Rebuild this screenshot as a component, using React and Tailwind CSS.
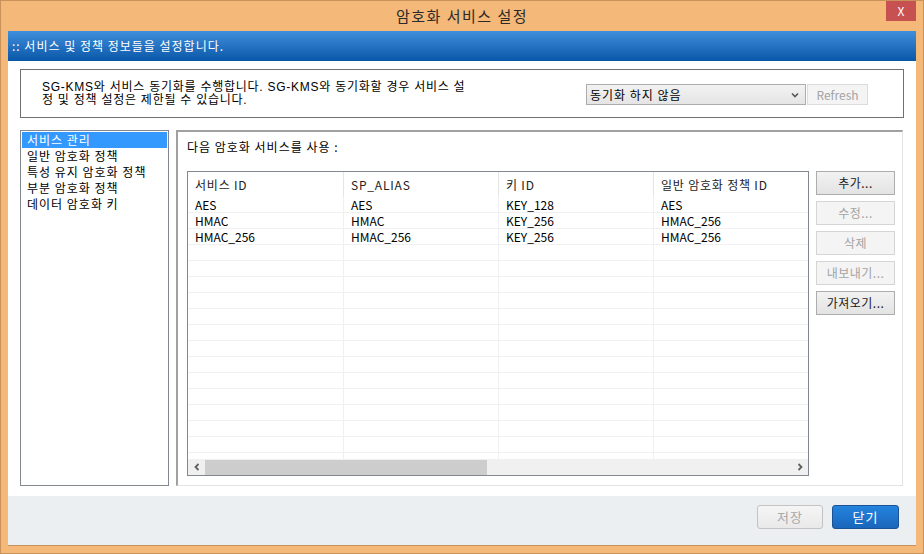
const rows = [
  ['AES', 'AES', 'KEY_128', 'AES'],
  ['HMAC', 'HMAC', 'KEY_256', 'HMAC_256'],
  ['HMAC_256', 'HMAC_256', 'KEY_256', 'HMAC_256'],
]

const columns = ['서비스 ID', 'SP_ALIAS', '키 ID', '일반 암호화 정책 ID']

const menu = ['서비스 관리', '일반 암호화 정책', '특성 유지 암호화 정책', '부분 암호화 정책', '데이터 암호화 키']

const sideButtons = [
  { label: '추가...', enabled: true },
  { label: '수정...', enabled: false },
  { label: '삭제', enabled: false },
  { label: '내보내기...', enabled: false },
  { label: '가져오기...', enabled: true },
]

const font = { fontFamily: '"Noto Sans CJK KR", "Liberation Sans", sans-serif' }

function SideButton({ label, enabled }) {
  return (
    <button
      className={`w-[79px] h-[24px] border text-[12px] leading-none tracking-[0.5px] ${
        enabled
          ? 'border-[#adadad] bg-gradient-to-b from-[#f2f2f2] to-[#e3e3e3] text-[#1a1a1a]'
          : 'border-[#d5d5d5] bg-[#f4f4f4] text-[#a3a3a3]'
      }`}
    >
      {label}
    </button>
  )
}

export default function App() {
  const emptyRows = Array.from({ length: 14 })

  return (
    <div
      className="w-[924px] h-[554px] bg-[#f4b878] border border-[#c8925a] flex flex-col overflow-hidden text-[12px] text-black"
      style={font}
    >
      {/* Title bar */}
      <div className="relative h-[30px] flex items-center justify-center shrink-0">
        <span className="text-[15px] text-[#2a2a2a] tracking-[1.5px]">암호화 서비스 설정</span>
        <div className="absolute top-[-1px] right-[7px] w-[30px] h-[21px] bg-[#c75050] flex items-center justify-center text-white text-[12px]">
          X
        </div>
      </div>

      {/* Client area */}
      <div className="h-[515px] mx-[7px] flex flex-col bg-white border-b border-[#c8925a] overflow-hidden">
        <div className="h-[30px] shrink-0 bg-gradient-to-b from-[#3e8fdc] to-[#0757a8] flex items-center pl-[4px] text-white text-[12px] tracking-[1px]">
          :: 서비스 및 정책 정보들을 설정합니다.
        </div>

        <div className="h-[435px] shrink-0 flex flex-col px-[12px] pt-[8px]">
          {/* Sync box */}
          <div className="h-[49px] border border-[#707070] flex items-center pl-[21px] pr-[35px] shrink-0">
            <div className="flex-1 flex flex-col whitespace-nowrap tracking-[0.75px] font-['Liberation_Sans','Noto_Sans_CJK_KR',sans-serif]">
              <div className="h-[13px] leading-[13px]">SG-KMS와 서비스 동기화를 수행합니다. SG-KMS와 동기화할 경우 서비스 설</div>
              <div className="h-[13px] leading-[13px]">정 및 정책 설정은 제한될 수 있습니다.</div>
            </div>
            <div className="flex items-center gap-[1px] mt-[2px]">
              <div className="w-[220px] h-[21px] border border-[#acacac] bg-gradient-to-b from-[#f2f2f2] to-[#e5e5e5] flex items-center pl-[3px] pr-[6px]">
                <span className="flex-1 tracking-[1px]">동기화 하지 않음</span>
                <svg width="8" height="6" viewBox="0 0 8 6" className="text-[#555]">
                  <path d="M1 1.5 L4 4.5 L7 1.5" fill="none" stroke="currentColor" strokeWidth="1.6" />
                </svg>
              </div>
              <div className="w-[61px] h-[21px] border border-[#dcdcdc] bg-[#f4f4f4] flex items-center justify-center text-[#a3a3a3]">
                Refresh
              </div>
            </div>
          </div>

          {/* Main area */}
          <div className="h-[356px] shrink-0 flex gap-[7px] mt-[12px]">
            {/* Left menu */}
            <div className="w-[149px] border border-[#828790] p-[1px] flex flex-col">
              {menu.map((item, i) => (
                <div
                  key={item}
                  className={`h-[16px] leading-[16px] pl-[5px] whitespace-nowrap tracking-[1px] ${
                    i === 0 ? 'bg-[#3399ff] text-white' : ''
                  }`}
                >
                  {item}
                </div>
              ))}
            </div>

            {/* Right panel */}
            <div className="w-[727px] border-l-2 border-t-2 border-[#a0a0a0] border-r border-b border-r-[#e3e3e3] border-b-[#e3e3e3] flex flex-col pl-[9px] pt-[8px] pb-[8px] overflow-hidden">
              <div className="h-[14px] leading-[14px] shrink-0 tracking-[1px]">다음 암호화 서비스를 사용 :</div>
              <div className="h-[305px] shrink-0 flex gap-[7px] mt-[17px]">
                {/* Table */}
                <div className="w-[622px] h-[305px] border border-[#828790] flex flex-col overflow-hidden">
                  <div className="grid grid-cols-[156px_155px_155px_1fr] h-[25px] shrink-0 text-[#222]">
                    {columns.map((c, i) => (
                      <div
                        key={c}
                        className={`pl-[7px] flex items-center tracking-[0.8px] ${i < 3 ? 'border-r border-[#e5e5e5]' : ''}`}
                      >
                        {c}
                      </div>
                    ))}
                  </div>
                  <div className="h-[262px] shrink-0 overflow-hidden">
                    {rows.map((r, ri) => (
                      <div key={ri} className="grid grid-cols-[156px_155px_155px_1fr] h-[16px] border-b border-[#f0f0f0]">
                        {r.map((v, i) => (
                          <div
                            key={i}
                            className={`pl-[7px] leading-[15px] ${i < 3 ? 'border-r border-[#f0f0f0]' : ''}`}
                          >
                            {v}
                          </div>
                        ))}
                      </div>
                    ))}
                    {emptyRows.map((_, ri) => (
                      <div key={ri} className="grid grid-cols-[156px_155px_155px_1fr] h-[16px] border-b border-[#f0f0f0]">
                        <div className="border-r border-[#f0f0f0]" />
                        <div className="border-r border-[#f0f0f0]" />
                        <div className="border-r border-[#f0f0f0]" />
                        <div />
                      </div>
                    ))}
                  </div>
                  {/* Horizontal scrollbar */}
                  <div className="h-[16px] shrink-0 bg-[#f0f0f0] flex items-center">
                    <div className="w-[17px] h-full flex items-center justify-center">
                      <svg width="8" height="8" viewBox="0 0 8 8">
                        <path d="M5.5 1 L2.5 4 L5.5 7" fill="none" stroke="#606060" strokeWidth="1.8" />
                      </svg>
                    </div>
                    <div className="w-[282px] h-[15px] bg-[#cdcdcd]" />
                    <div className="flex-1" />
                    <div className="w-[17px] h-full flex items-center justify-center">
                      <svg width="8" height="8" viewBox="0 0 8 8">
                        <path d="M2.5 1 L5.5 4 L2.5 7" fill="none" stroke="#606060" strokeWidth="1.8" />
                      </svg>
                    </div>
                  </div>
                </div>

                {/* Side buttons */}
                <div className="flex flex-col gap-[6px]">
                  {sideButtons.map((b) => (
                    <SideButton key={b.label} {...b} />
                  ))}
                </div>
              </div>
            </div>
          </div>
        </div>

        {/* Footer */}
        <div className="flex-1 bg-[#ebeff2] flex items-start justify-end gap-[9px] pr-[17px] pt-[9px]">
          <button className="w-[66px] h-[24px] rounded-[3px] border border-[#c3c3c3] bg-gradient-to-b from-[#f5f5f5] to-[#e9e9e9] text-[#a8a8a8] text-[13px] tracking-[1px]">
            저장
          </button>
          <button className="w-[67px] h-[24px] rounded-[3px] border border-[#1a5295] bg-gradient-to-b from-[#2484de] to-[#1a66bb] text-white text-[13px] tracking-[1px]">
            닫기
          </button>
        </div>
      </div>
    </div>
  )
}
